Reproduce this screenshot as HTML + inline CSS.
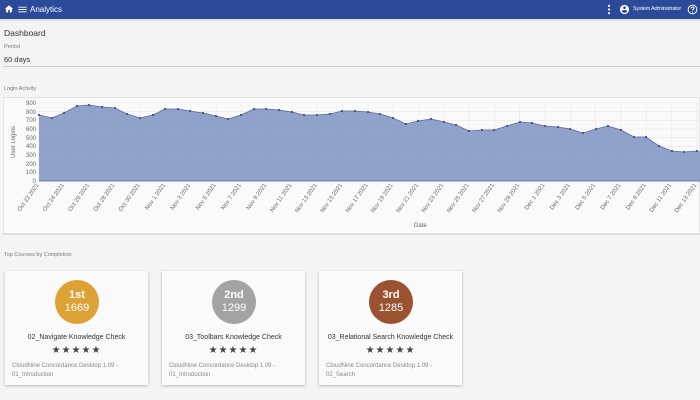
<!DOCTYPE html>
<html><head><meta charset="utf-8"><style>
*{margin:0;padding:0;box-sizing:border-box}
body{width:700px;height:400px;overflow:hidden;background:#f4f4f4;font-family:"Liberation Sans",sans-serif;color:#333;position:relative}
.hdr{position:absolute;left:0;top:0;width:700px;height:19px;background:#2c4a9a;color:#fff;font-size:8px}
.abs{position:absolute}
.card{position:absolute;top:271px;width:143px;height:114px;background:#fafafa;box-shadow:0 1px 3px rgba(0,0,0,.25);text-align:center}
.circ{position:absolute;left:50px;top:9px;width:44px;height:44px;border-radius:50%;color:#fff;font-size:11px;line-height:13px;padding-top:9px}
.circ b{display:block;font-size:11px}
.t{position:absolute;left:0;width:143px;top:63px;font-size:7px;color:#333}
.st{position:absolute;left:0;width:143px;top:74px;font-size:10px;color:#444;letter-spacing:1px}
.d{position:absolute;left:7px;top:91px;text-align:left;font-size:6px;color:#888;line-height:9px}
</style></head><body>
<div class="hdr">
<svg class="abs" style="left:4px;top:4px" width="10" height="10" viewBox="0 0 24 24"><path fill="#fff" d="M10 20v-6h4v6h5v-8h3L12 3 2 12h3v8z"/></svg>
<svg class="abs" style="left:17px;top:4px" width="11" height="11" viewBox="0 0 24 24"><path fill="#fff" d="M3 18h18v-2H3v2zm0-5h18v-2H3v2zm0-7v2h18V6H3z"/></svg>
<span class="abs" style="left:30px;top:5px">Analytics</span>
<svg class="abs" style="left:607px;top:4px" width="4" height="11" viewBox="0 0 4 12"><circle cx="2" cy="2" r="1.2" fill="#fff"/><circle cx="2" cy="6" r="1.2" fill="#fff"/><circle cx="2" cy="10" r="1.2" fill="#fff"/></svg>
<svg class="abs" style="left:619px;top:4px" width="11" height="11" viewBox="0 0 24 24"><path fill="#fff" d="M12 2a10 10 0 100 20 10 10 0 000-20zm0 3a3 3 0 110 6 3 3 0 010-6zm0 14.2c-2.5 0-4.7-1.3-6-3.2.03-2 4-3.1 6-3.1s5.97 1.1 6 3.1c-1.3 1.9-3.5 3.2-6 3.2z"/></svg>
<span class="abs" style="left:633px;top:6px;font-size:5.3px;letter-spacing:-0.1px">System Administrator</span>
<svg class="abs" style="left:687px;top:4px" width="11" height="11" viewBox="0 0 24 24"><circle cx="12" cy="12" r="9.5" fill="none" stroke="#fff" stroke-width="2.2"/><path d="M9 9.5a3 3 0 116 0c0 2-3 2.3-3 4.5" fill="none" stroke="#fff" stroke-width="2.2"/><circle cx="12" cy="17.5" r="1.3" fill="#fff"/></svg>
</div>
<div class="abs" style="left:0;top:19px;width:700px;height:2px;background:#ddd"></div>
<div class="abs" style="left:4px;top:28px;font-size:8.5px">Dashboard</div>
<div class="abs" style="left:4px;top:44px;font-size:5.5px;color:#777">Period</div>
<div class="abs" style="left:4px;top:55px;font-size:7.5px">60 days</div>
<div class="abs" style="left:3px;top:66px;width:697px;height:1px;background:#ccc"></div>
<div class="abs" style="left:4px;top:86px;font-size:5.5px;color:#777">Login Activity</div>
<div class="abs" style="left:3px;top:97px;width:697px;height:138px;background:#fafafa;border:1px solid #e4e4e4;border-bottom:2px solid #ddd"></div>
<svg class="abs" style="left:0;top:0" width="700" height="240">
<g stroke="#e6e6e6" stroke-width="0.6">
<line x1="39" x2="700" y1="103" y2="103"/><line x1="39" x2="700" y1="111.7" y2="111.7"/><line x1="39" x2="700" y1="120.3" y2="120.3"/><line x1="39" x2="700" y1="129" y2="129"/><line x1="39" x2="700" y1="137.7" y2="137.7"/><line x1="39" x2="700" y1="146.3" y2="146.3"/><line x1="39" x2="700" y1="155" y2="155"/><line x1="39" x2="700" y1="163.7" y2="163.7"/><line x1="39" x2="700" y1="172.3" y2="172.3"/>
</g>
<g id="vg" stroke="#e4e4e4" stroke-width="0.5"></g>
<polygon fill="#8a9cc8" fill-opacity="0.95" points="39,181 39,115 52,118 64,113 77,106 89,105 102,107 115,108 127,114 140,118 153,115 165,109 178,109 190,111 203,113 216,116 228,119 241,115 254,109 266,109 279,110 292,112 304,115 317,115 330,114 342,111 355,111 368,112 380,114 393,118 406,124 418,121 431,119 444,122 456,125 469,131 482,130 494,130 507,126 520,122 532,123 545,126 558,127 570,129 583,133 596,129 608,126 621,130 634,137 646,137 659,146 672,151 684,152 697,151 700,151 700,181"/>
<polyline fill="none" stroke="#5a6a96" stroke-width="0.8" points="39,115 52,118 64,113 77,106 89,105 102,107 115,108 127,114 140,118 153,115 165,109 178,109 190,111 203,113 216,116 228,119 241,115 254,109 266,109 279,110 292,112 304,115 317,115 330,114 342,111 355,111 368,112 380,114 393,118 406,124 418,121 431,119 444,122 456,125 469,131 482,130 494,130 507,126 520,122 532,123 545,126 558,127 570,129 583,133 596,129 608,126 621,130 634,137 646,137 659,146 672,151 684,152 697,151"/>
<g fill="#44507a" id="pts"></g>
<line x1="39" x2="700" y1="181" y2="181" stroke="#7080b0" stroke-width="1"/>
<g font-size="6" fill="#666" text-anchor="end">
<text x="36" y="105">900</text><text x="36" y="114">800</text><text x="36" y="122">700</text><text x="36" y="131">600</text><text x="36" y="140">500</text><text x="36" y="148">400</text><text x="36" y="157">300</text><text x="36" y="166">200</text><text x="36" y="174">100</text><text x="36" y="183">0</text>
</g>
<text x="15" y="142" font-size="6" fill="#666" text-anchor="middle" transform="rotate(-90 15 142)">User Logins</text>
<text x="414" y="227" font-size="6" fill="#666">Date</text>
<g id="lbl" font-size="6" fill="#666" text-anchor="end"></g>
</svg>
<script>
var p="39,115 52,118 64,113 77,106 89,105 102,107 115,108 127,114 140,118 153,115 165,109 178,109 190,111 203,113 216,116 228,119 241,115 254,109 266,109 279,110 292,112 304,115 317,115 330,114 342,111 355,111 368,112 380,114 393,118 406,124 418,121 431,119 444,122 456,125 469,131 482,130 494,130 507,126 520,122 532,123 545,126 558,127 570,129 583,133 596,129 608,126 621,130 634,137 646,137 659,146 672,151 684,152 697,151".split(" ");
var s="";p.forEach(function(q){var a=q.split(",");s+='<circle cx="'+a[0]+'" cy="'+a[1]+'" r="1.1"/>';});
document.getElementById("pts").innerHTML=s;
var L=[];[22,24,26,28,30].forEach(function(d){L.push("Oct "+d+" 2021")});
for(var d=1;d<=29;d+=2)L.push("Nov "+d+" 2021");
for(var d=1;d<=13;d+=2)L.push("Dec "+d+" 2021");
var t="",g="";L.forEach(function(l,i){var x=(39+25.3*i).toFixed(1),y=185;
g+='<line x1="'+x+'" x2="'+x+'" y1="103" y2="181"/>';
t+='<text x="'+x+'" y="'+y+'" transform="rotate(-55 '+x+' '+y+')">'+l+'</text>';});
document.getElementById("lbl").innerHTML=t;
document.getElementById("vg").innerHTML=g;
</script>
<div class="abs" style="left:4px;top:252px;font-size:5.5px;color:#777">Top Courses by Completion</div>
<div class="card" style="left:5px"><div class="circ" style="background:#dca236"><b>1st</b>1669</div><div class="t">02_Navigate Knowledge Check</div><div class="st">★★★★★</div><div class="d">CloudNine Concordance Desktop 1.09 -<br>01_Introduction</div></div>
<div class="card" style="left:162px"><div class="circ" style="background:#a3a3a3"><b>2nd</b>1299</div><div class="t">03_Toolbars Knowledge Check</div><div class="st">★★★★★</div><div class="d">CloudNine Concordance Desktop 1.09 -<br>01_Introduction</div></div>
<div class="card" style="left:319px"><div class="circ" style="background:#9a5231"><b>3rd</b>1285</div><div class="t">03_Relational Search Knowledge Check</div><div class="st">★★★★★</div><div class="d">CloudNine Concordance Desktop 1.09 -<br>02_Search</div></div>
</body></html>
